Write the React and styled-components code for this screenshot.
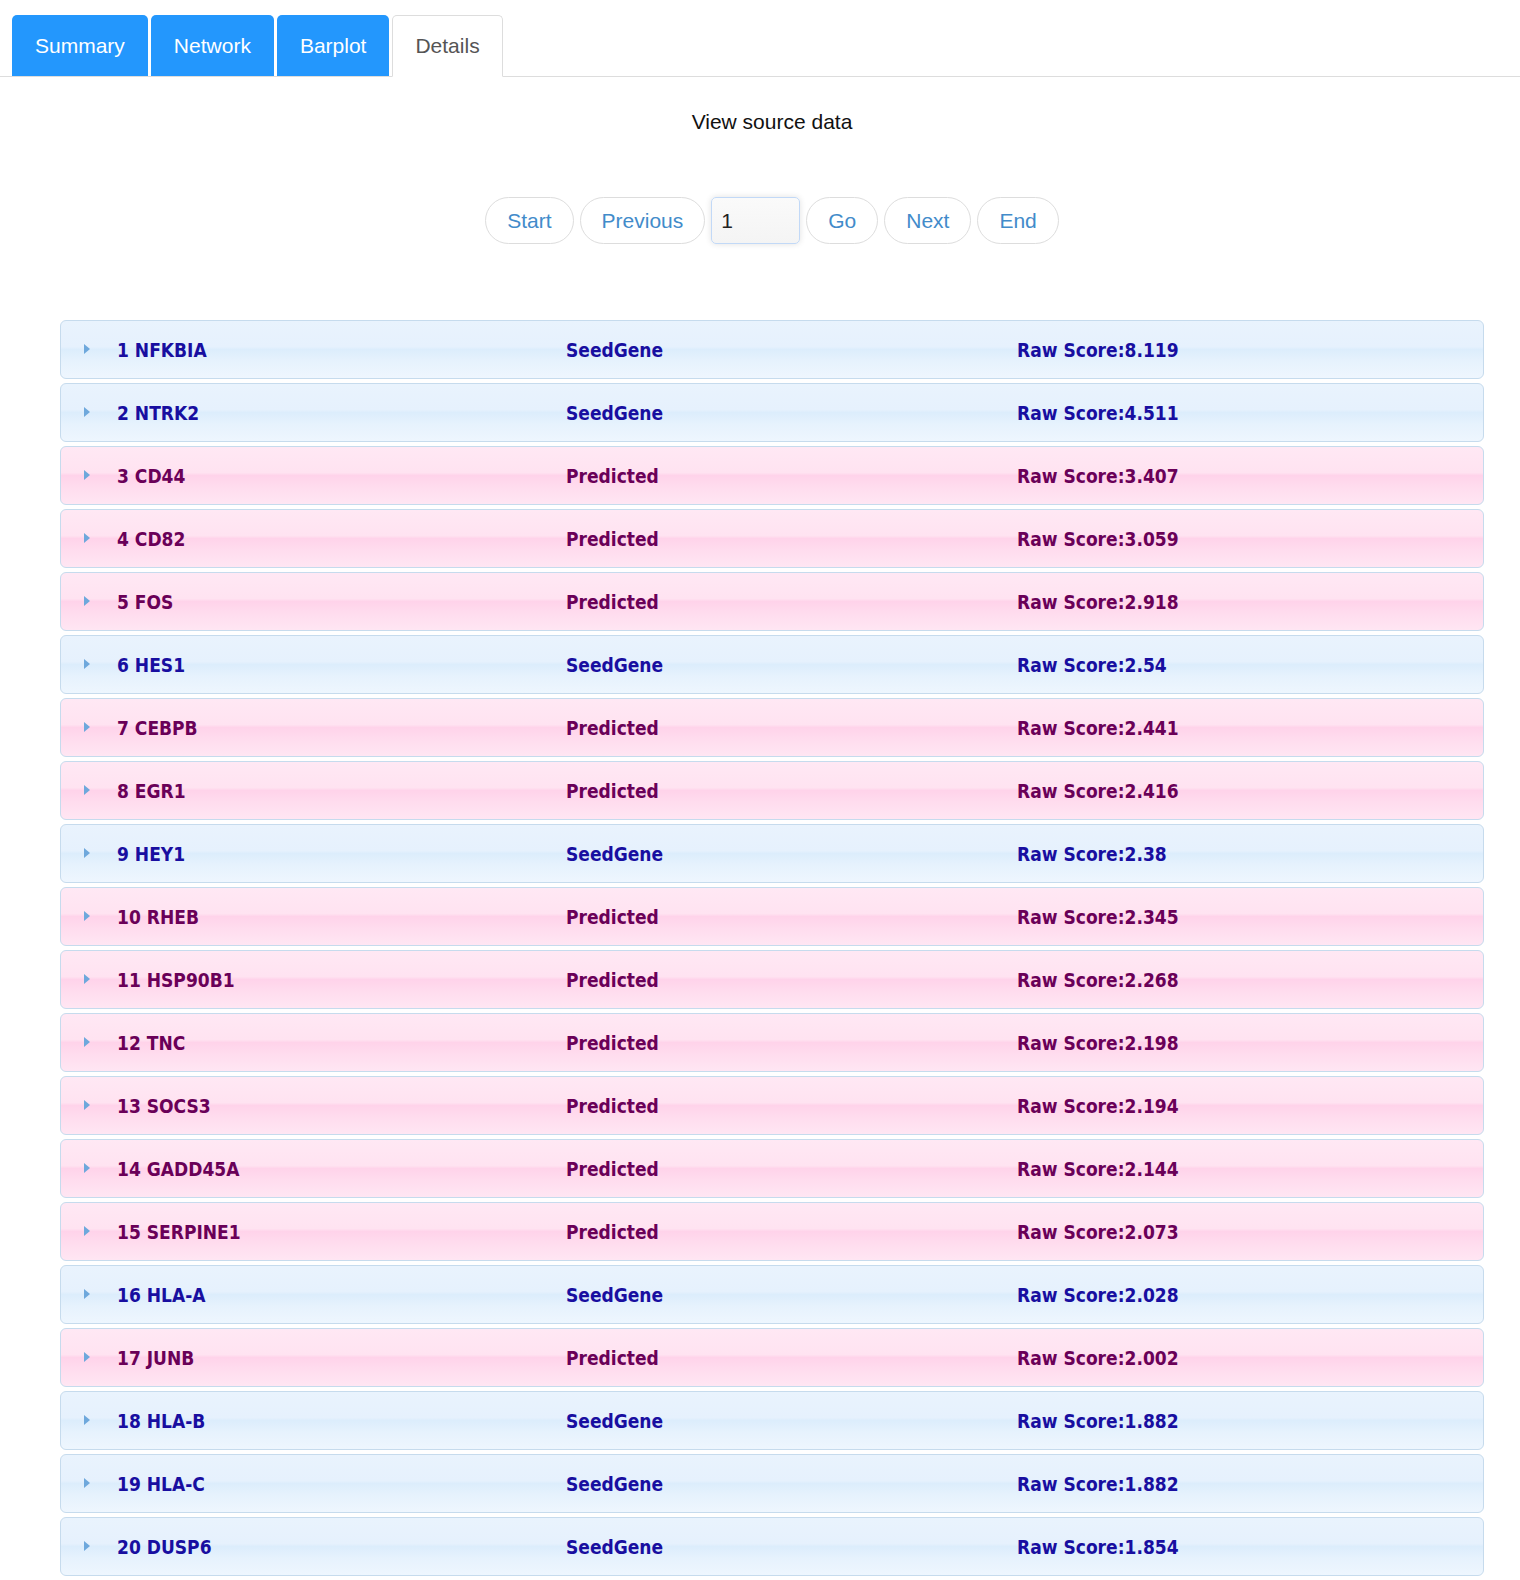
import styled, { createGlobalStyle } from "styled-components"

const genes = [
  ["1 NFKBIA", "SeedGene", "8.119"],
  ["2 NTRK2", "SeedGene", "4.511"],
  ["3 CD44", "Predicted", "3.407"],
  ["4 CD82", "Predicted", "3.059"],
  ["5 FOS", "Predicted", "2.918"],
  ["6 HES1", "SeedGene", "2.54"],
  ["7 CEBPB", "Predicted", "2.441"],
  ["8 EGR1", "Predicted", "2.416"],
  ["9 HEY1", "SeedGene", "2.38"],
  ["10 RHEB", "Predicted", "2.345"],
  ["11 HSP90B1", "Predicted", "2.268"],
  ["12 TNC", "Predicted", "2.198"],
  ["13 SOCS3", "Predicted", "2.194"],
  ["14 GADD45A", "Predicted", "2.144"],
  ["15 SERPINE1", "Predicted", "2.073"],
  ["16 HLA-A", "SeedGene", "2.028"],
  ["17 JUNB", "Predicted", "2.002"],
  ["18 HLA-B", "SeedGene", "1.882"],
  ["19 HLA-C", "SeedGene", "1.882"],
  ["20 DUSP6", "SeedGene", "1.854"],
]

const GlobalStyle = createGlobalStyle`
  body {
    margin: 0;
    background: #fff;
    font-family: "Liberation Sans", Arial, sans-serif;
  }
`

function App() {
  return (
    <>
      <GlobalStyle />
      <TabBar>
        <Tab>Summary</Tab>
        <Tab>Network</Tab>
        <Tab>Barplot</Tab>
        <Tab active>Details</Tab>
      </TabBar>
      <Content>
        <SourceLink>View source data</SourceLink>
        <Pager>
          <PageButton>Start</PageButton>
          <PageButton>Previous</PageButton>
          <PageInput defaultValue="1" />
          <PageButton>Go</PageButton>
          <PageButton>Next</PageButton>
          <PageButton>End</PageButton>
        </Pager>
        <GeneList>
          {genes.map(([name, kind, score]) => {
            const seed = kind === "SeedGene"
            return (
              <GeneRow key={name} seed={seed}>
                <Arrow />
                <Cell>{name}</Cell>
                <Cell>{kind}</Cell>
                <Cell>Raw Score:{score}</Cell>
              </GeneRow>
            )
          })}
        </GeneList>
      </Content>
    </>
  )
}

const TabBar = styled.div`
  display: flex;
  padding: 15px 0 0 12px;
  border-bottom: 1px solid #ddd;
`
const Tab = styled.div.withConfig({ shouldForwardProp: (p) => p !== "active" })`
  height: ${(p) => (p.active ? "60px" : "61px")};
  display: flex;
  align-items: center;
  padding: 0 ${(p) => (p.active ? "22px" : "23px")};
  margin-right: 3px;
  margin-bottom: -1px;
  border-radius: 5px 5px 0 0;
  font-size: 21px;
  background: ${(p) => (p.active ? "#fff" : "#2397fd")};
  color: ${(p) => (p.active ? "#555" : "#fff")};
  border: ${(p) => (p.active ? "1px solid #ddd" : "none")};
  border-bottom: ${(p) => (p.active ? "1px solid #fff" : "none")};
`
const Content = styled.div`
  margin: 0 36px 0 60px;
  display: flex;
  flex-direction: column;
  align-items: stretch;
`
const SourceLink = styled.div`
  text-align: center;
  font-size: 21px;
  color: #111;
  margin-top: 33px;
  line-height: 24px;
`
const Pager = styled.div`
  display: flex;
  justify-content: center;
  gap: 6px;
  margin-top: 63px;
`
const PageButton = styled.button`
  height: 47px;
  padding: 0 21px;
  border: 1px solid #ddd;
  border-radius: 24px;
  background: #fff;
  color: #428bca;
  font-family: "Liberation Sans", Arial, sans-serif;
  font-size: 21px;
  cursor: pointer;
`
const PageInput = styled.input`
  width: 89px;
  height: 47px;
  box-sizing: border-box;
  padding: 0 9px;
  border: 1px solid #c2d9f7;
  border-radius: 5px;
  background: linear-gradient(#fafafa, #f4f4f4);
  box-shadow: 0 0 6px rgba(0, 0, 0, 0.12);
  font-family: "Liberation Sans", Arial, sans-serif;
  font-size: 21px;
  color: #222;
  outline: none;
`
const GeneList = styled.div`
  margin-top: 76px;
  display: flex;
  flex-direction: column;
  gap: 4px;
`
const GeneRow = styled.div.withConfig({ shouldForwardProp: (p) => p !== "seed" })`
  height: 57px;
  display: grid;
  grid-template-columns: 449px 451px 1fr;
  align-items: center;
  padding-left: 56px;
  position: relative;
  border: 1px solid #c6dbed;
  border-radius: 6px;
  font-family: "DejaVu Sans Condensed", "DejaVu Sans", sans-serif;
  font-stretch: condensed;
  font-weight: bold;
  font-size: 19px;
  color: ${(p) => (p.seed ? "#180ea0" : "#6a0058")};
  background: ${(p) =>
    p.seed
      ? "linear-gradient(#e9f3fd 0%, #e6f1fd 45%, #dcedfc 50%, #e6f2fd 70%, #eef6fe 100%)"
      : "linear-gradient(#ffe8f4 0%, #ffe3f1 45%, #ffd3ea 50%, #ffdcee 70%, #ffe6f3 100%)"};
`
const Arrow = styled.span`
  position: absolute;
  left: 23px;
  top: 23px;
  width: 0;
  height: 0;
  border-top: 5px solid transparent;
  border-bottom: 5px solid transparent;
  border-left: 6px solid #6ea8dc;
`
const Cell = styled.span`
  white-space: nowrap;
`

export default App
